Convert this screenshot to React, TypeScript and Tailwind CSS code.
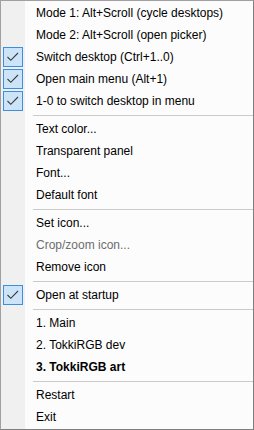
import React from "react";

type Item =
  | { kind: "item"; label: string; checked?: boolean; disabled?: boolean; bold?: boolean }
  | { kind: "sep" };

const items: Item[] = [
  { kind: "item", label: "Mode 1: Alt+Scroll (cycle desktops)" },
  { kind: "item", label: "Mode 2: Alt+Scroll (open picker)" },
  { kind: "item", label: "Switch desktop (Ctrl+1..0)", checked: true },
  { kind: "item", label: "Open main menu (Alt+1)", checked: true },
  { kind: "item", label: "1-0 to switch desktop in menu", checked: true },
  { kind: "sep" },
  { kind: "item", label: "Text color..." },
  { kind: "item", label: "Transparent panel" },
  { kind: "item", label: "Font..." },
  { kind: "item", label: "Default font" },
  { kind: "sep" },
  { kind: "item", label: "Set icon..." },
  { kind: "item", label: "Crop/zoom icon...", disabled: true },
  { kind: "item", label: "Remove icon" },
  { kind: "sep" },
  { kind: "item", label: "Open at startup", checked: true },
  { kind: "sep" },
  { kind: "item", label: "1. Main" },
  { kind: "item", label: "2. TokkiRGB dev" },
  { kind: "item", label: "3. TokkiRGB art", bold: true },
  { kind: "sep" },
  { kind: "item", label: "Restart" },
  { kind: "item", label: "Exit" },
];

function Check() {
  return (
    <div className="w-5 h-5 border border-[#3d8ee0] bg-[#cce4f7] flex items-center justify-center">
      <svg width="18" height="18" viewBox="0 0 18 18">
        <path d="M3.5 9 L6.8 12.3 L14 5" fill="none" stroke="#3a3a3a" strokeWidth="1.1" />
      </svg>
    </div>
  );
}

export default function App() {
  return (
    <div
      className="w-[254px] h-[430px] border border-[#a0a0a0] border-r-[#7f7f7f] border-b-[#7f7f7f] bg-[linear-gradient(to_right,#f0f0f0_24px,#fcfcfc_24px)] py-px text-[12px] text-black"
      style={{ fontFamily: '"Segoe UI", "Liberation Sans", Arial, sans-serif' }}
    >
      {items.map((it, i) =>
        it.kind === "sep" ? (
          <div key={i} className="h-[6px] pt-[3px]">
            <div className="h-px ml-[32px] bg-[#cbcbcb]" />
          </div>
        ) : (
          <div key={i} className="h-[22px] flex items-center">
            <div className="w-[35px] pl-[2px] flex items-center">
              {it.checked ? <Check /> : null}
            </div>
            <span
              className={
                (it.disabled ? "text-[#6d6d6d]" : "text-black") +
                (it.bold ? " font-bold" : "") +
                " whitespace-nowrap leading-none"
              }
            >
              {it.label}
            </span>
          </div>
        )
      )}
    </div>
  );
}
